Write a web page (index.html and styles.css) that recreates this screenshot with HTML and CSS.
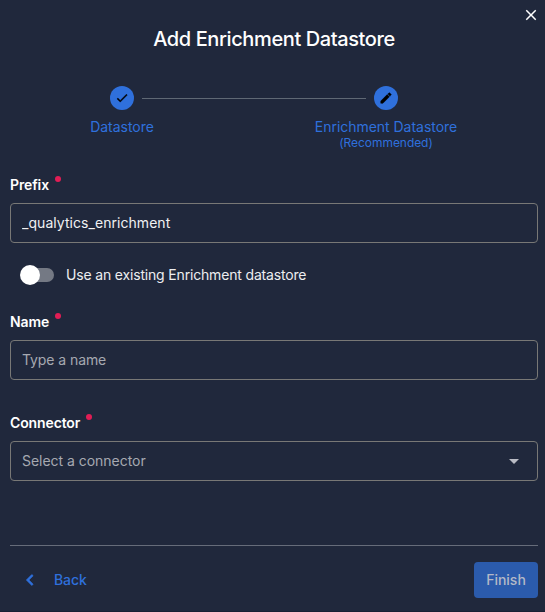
FILE: index.html
```html
<!DOCTYPE html>
<html lang="en">
<head>
<meta charset="utf-8">
<title>Add Enrichment Datastore</title>
<link rel="stylesheet" href="styles.css">
</head>
<body>
<main class="dialog">
  <button class="close" aria-label="Close">
    <svg width="18" height="18" viewBox="0 0 24 24"><path fill="currentColor" d="M19 6.41 17.59 5 12 10.59 6.41 5 5 6.41 10.59 12 5 17.59 6.41 19 12 13.41 17.59 19 19 17.59 13.41 12z"/></svg>
  </button>
  <h1 class="title">Add Enrichment Datastore</h1>

  <div class="stepper">
    <div class="step">
      <span class="badge"><svg width="14" height="14" viewBox="0 0 24 24"><path stroke="currentColor" stroke-width=".8" d="M21 7 9 19l-5.500-5.500 1.410-1.410L9 16.170 19.590 5.590z"/></svg></span>
      <span class="step-label">Datastore</span>
    </div>
    <span class="connector"></span>
    <div class="step">
      <span class="badge"><svg width="14" height="14" viewBox="0 0 24 24"><path stroke="currentColor" stroke-width=".8" d="M20.710 7.040c.39-.39.39-1.040 0-1.410l-2.340-2.340c-.37-.39-1.020-.39-1.410 0l-1.840 1.830 3.750 3.750M3 17.250V21h3.750L17.810 9.930l-3.750-3.750z"/></svg></span>
      <span class="step-label">Enrichment Datastore</span>
      <span class="step-note">(Recommended)</span>
    </div>
  </div>

  <label class="label" for="prefix">Prefix<i class="required"></i></label>
  <input class="field field-value" id="prefix" type="text" value="_qualytics_enrichment" spellcheck="false">

  <div class="toggle-row">
    <span class="switch"><span class="thumb"></span></span>
    <span class="toggle-text">Use an existing Enrichment datastore</span>
  </div>

  <label class="label" for="name">Name<i class="required"></i></label>
  <input class="field" id="name" type="text" placeholder="Type a name">

  <div class="label label-connector">Connector<i class="required"></i></div>
  <div class="field select">
    <span>Select a connector</span>
    <svg width="24" height="24" viewBox="0 0 24 24"><path fill="currentColor" d="m7 10 5 5 5-5z"/></svg>
  </div>

  <footer class="footer">
    <button class="back">
      <svg width="22" height="22" viewBox="0 0 24 24"><path fill="currentColor" d="M15.410 16.580 10.830 12l4.580-4.590L14 6l-6 6 6 6z" stroke="currentColor" stroke-width=".7"/></svg>
      <span>Back</span>
    </button>
    <button class="finish">Finish</button>
  </footer>
</main>
</body>
</html>
```

FILE: styles.css
```css
* { box-sizing: border-box; }

body {
  margin: 0;
  background: #20283c;
  color: #fff;
  font: 14px/20px Inter, "Liberation Sans", sans-serif;
}

button {
  border: 0;
  padding: 0;
  background: none;
  color: inherit;
  font: inherit;
}

svg { display: block; flex: none; }

.dialog {
  position: relative;
  height: 612px;
  padding: 25px 7px 0 10px;
  border-bottom: 1px solid #1a2033;
}

.close {
  position: absolute;
  top: 6px;
  right: 5px;
}

.title {
  margin: 0;
  font-size: 20px;
  line-height: 28px;
  font-weight: 500;
  letter-spacing: -0.39px;
  text-align: center;
}

.stepper {
  display: flex;
  justify-content: center;
  margin-top: 33px;
  padding-right: 40px;
  color: #2f70dc;
}

.step {
  display: flex;
  flex-direction: column;
  align-items: center;
  width: 24px;
  height: 89px;
  white-space: nowrap;
}

.badge {
  display: grid;
  place-items: center;
  flex: none;
  width: 24px;
  height: 24px;
  border-radius: 50%;
  background: #2f70dc;
  color: #000;
}

.step-label { margin-top: 7px; letter-spacing: -0.03px; }

.step-note {
  margin-top: -3px;
  font-size: 12px;
  line-height: 18px;
  letter-spacing: -0.05px;
}

.connector {
  width: 224px;
  height: 1px;
  margin: 12px 8px 0;
  background: #5f6874;
}

.label {
  display: flex;
  height: 28px;
  font-weight: 600;
  letter-spacing: -0.12px;
}

.required {
  width: 6px;
  height: 6px;
  margin: 1px 0 0 6px;
  border-radius: 50%;
  background: #e11d55;
}

.field {
  display: block;
  width: 100%;
  height: 40px;
  padding: 0 11px 2px;
  border: 1px solid #787876;
  border-radius: 4px;
  background: transparent;
  color: #f0f1f3;
  font: inherit;
  outline: 0;
}

.field-value { letter-spacing: 0.05px; }

.field::placeholder { color: #a6a9b1; opacity: 1; letter-spacing: -0.08px; }

.toggle-row {
  display: flex;
  align-items: center;
  height: 64px;
  margin-bottom: 5px;
  padding-left: 10px;
}

.switch {
  display: flex;
  align-items: center;
  width: 34px;
  height: 14px;
  border-radius: 7px;
  background: linear-gradient(#747984, #747984) right / 28px 14px no-repeat;
}

.thumb {
  width: 20px;
  height: 20px;
  border-radius: 50%;
  background: #fff;
}

.toggle-text { margin-left: 12px; color: #edeef0; letter-spacing: -0.17px; }

.label-connector { margin-top: 33px; }

.select {
  display: flex;
  align-items: center;
  justify-content: space-between;
  padding-bottom: 0;
  color: #a6a9b1;
  letter-spacing: -0.03px;
}

.select svg { color: #b9bbc4; }

.footer {
  display: flex;
  justify-content: space-between;
  margin-top: 64px;
  padding-top: 16px;
  border-top: 1px solid #666c7a;
}

.back {
  display: flex;
  align-items: center;
  gap: 13px;
  height: 36px;
  padding-left: 9px;
  color: #2f70dc;
  font-weight: 500;
  letter-spacing: -0.1px;
}

.finish {
  width: 64px;
  height: 36px;
  border-radius: 4px;
  background: #2b5bac;
  color: #b3b9c7;
  font-weight: 500;
}
```
